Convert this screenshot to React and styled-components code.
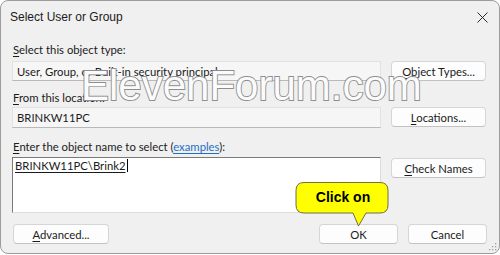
import React from "react";
import styled, { createGlobalStyle } from "styled-components";

const Global = createGlobalStyle`
  html, body { margin: 0; padding: 0; background: #ffffff; }
  body { font-family: Lato, "Liberation Sans", sans-serif; }
`;

const Window = styled.div`
  position: relative;
  box-sizing: border-box;
  width: 500px;
  height: 254px;
  border: 1px solid #9c9c9c;
  border-radius: 8px;
  background: #f0f0f0;
  overflow: hidden;
  display: flex;
  flex-direction: column;
  color: #1b1b1b;
  font-size: 11.3px;
`;

const TitleBar = styled.div`
  height: 32px;
  display: flex;
  align-items: center;
  justify-content: space-between;
  padding: 0 11px 0 9px;
  font-family: "Liberation Sans", Arial, sans-serif;
  font-size: 12px;
`;

const Close = styled.svg`
  width: 11px;
  height: 11px;
`;

const Body = styled.div`
  display: flex;
  flex-direction: column;
  padding: 0 12px 0 11px;
`;

const Label = styled.div`
  height: 16px;
  line-height: 16px;
  padding-left: 1px;
  margin-top: ${(p) => p.$top}px;
`;

const Key = styled.span`
  text-decoration: underline;
  text-underline-offset: 2px;
`;

const Link = styled.span`
  color: #1d6fc4;
  text-decoration: underline;
  text-underline-offset: 2px;
`;

const Row = styled.div`
  display: flex;
  align-items: flex-start;
  gap: 10px;
  margin-top: ${(p) => p.$top}px;
`;

const ReadBox = styled.div`
  box-sizing: border-box;
  width: 369px;
  height: ${(p) => p.$h}px;
  padding: 0 4px;
  display: flex;
  align-items: center;
  background: #f6f6f6;
  border: 1px solid #e2e2e2;
  border-bottom-color: #b9b9b9;
`;

const NameBox = styled.div`
  box-sizing: border-box;
  width: 369px;
  height: 56px;
  padding: 1px 2px;
  background: #ffffff;
  border: 1px solid #dcdcdc;
  border-top-color: #7a7a7a;
  border-left-color: #7a7a7a;
  line-height: 14px;
`;

const Resolved = styled.span`
  text-decoration: underline;
  text-underline-offset: 2px;
  border-right: 1px solid #000;
  padding-right: 1px;
`;

const Button = styled.div`
  box-sizing: border-box;
  width: ${(p) => p.$w || 95}px;
  height: 20px;
  display: flex;
  align-items: center;
  justify-content: center;
  background: #fdfdfd;
  border: 1px solid #d6d6d6;
  border-bottom-color: #c2c2c2;
  border-radius: 4px;
  margin-top: ${(p) => p.$top || 0}px;
`;

const Footer = styled.div`
  display: flex;
  align-items: center;
  gap: 10px;
  margin-top: 11px;
  padding: 0 12px 0 12px;
`;

const Spacer = styled.div`
  flex: 1;
`;

const Watermark = styled.div`
  position: absolute;
  left: 80px;
  top: 64px;
  font-family: "Liberation Sans", Arial, sans-serif;
  font-size: 42px;
  line-height: 42px;
  color: #fbfbfb;
  -webkit-text-stroke: 1.8px #8e8e8e;
  paint-order: stroke fill;
  white-space: nowrap;
  pointer-events: none;
`;

const Callout = styled.div`
  position: absolute;
  left: 294px;
  top: 180px;
  width: 95px;
  height: 47px;
`;

const CalloutShape = styled.svg`
  position: absolute;
  inset: 0;
`;

const CalloutText = styled.div`
  position: relative;
  height: 32px;
  display: flex;
  align-items: center;
  justify-content: center;
  padding-left: 1px;
  font-family: "Liberation Sans", Arial, sans-serif;
  font-weight: bold;
  font-size: 14px;
  color: #000;
`;

const Grip = styled.svg`
  position: absolute;
  right: 2px;
  bottom: 2px;
`;

export default function App() {
  return (
    <>
      <Global />
      <Window>
        <TitleBar>
          <span>Select User or Group</span>
          <Close viewBox="0 0 11 11">
            <path d="M0.5 0.5 L10.5 10.5 M10.5 0.5 L0.5 10.5" stroke="#2a2a2a" strokeWidth="1" />
          </Close>
        </TitleBar>
        <Body>
          <Label $top={9}>
            <Key>S</Key>elect this object type:
          </Label>
          <Row $top={3}>
            <ReadBox $h={20}>User, Group, or Built-in security principal</ReadBox>
            <Button>
              <span>
                <Key>O</Key>bject Types...
              </span>
            </Button>
          </Row>
          <Label $top={9}>
            <Key>F</Key>rom this location:
          </Label>
          <Row $top={1}>
            <ReadBox $h={21}>BRINKW11PC</ReadBox>
            <Button>
              <span>
                <Key>L</Key>ocations...
              </span>
            </Button>
          </Row>
          <Label $top={11}>
            <Key>E</Key>nter the object name to select (<Link>examples</Link>):
          </Label>
          <Row $top={2}>
            <NameBox>
              <Resolved>BRINKW11PC\Brink2</Resolved>
            </NameBox>
            <Button $top={1}>
              <span>
                <Key>C</Key>heck Names
              </span>
            </Button>
          </Row>
        </Body>
        <Footer>
          <Button $w={96}>
            <span>
              <Key>A</Key>dvanced...
            </span>
          </Button>
          <Spacer />
          <Button $w={79}>OK</Button>
          <Button $w={79}>Cancel</Button>
        </Footer>
        <Watermark>ElevenForum.com</Watermark>
        <Callout>
          <CalloutShape width="95" height="47" viewBox="0 0 95 47">
            <path
              d="M9 1.5 H85 Q93 1.5 93 9.5 V24 Q93 32 85 32 H71 L63.5 45 L58 32 H9 Q1 32 1 24 V9.5 Q1 1.5 9 1.5 Z"
              fill="#ffff00"
              stroke="#6e6e4a"
              strokeWidth="1"
            />
          </CalloutShape>
          <CalloutText>Click on</CalloutText>
        </Callout>
        <Grip width="10" height="10" viewBox="0 0 10 10">
          <g fill="#a0a0a0">
            <rect x="8" y="2" width="1.3" height="1.3" />
            <rect x="5" y="5" width="1.3" height="1.3" />
            <rect x="8" y="5" width="1.3" height="1.3" />
            <rect x="2" y="8" width="1.3" height="1.3" />
            <rect x="5" y="8" width="1.3" height="1.3" />
            <rect x="8" y="8" width="1.3" height="1.3" />
          </g>
        </Grip>
      </Window>
    </>
  );
}
